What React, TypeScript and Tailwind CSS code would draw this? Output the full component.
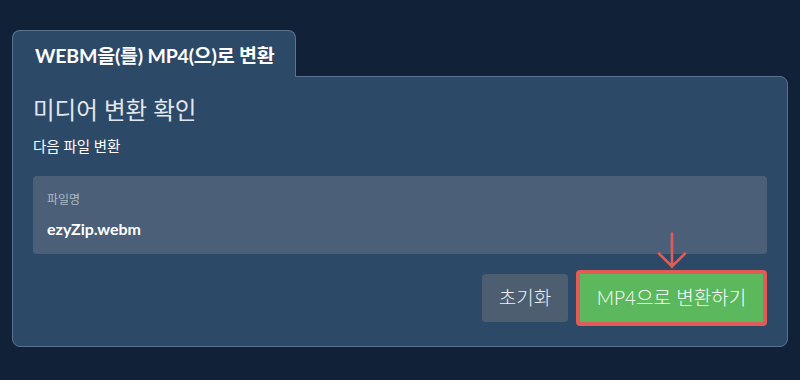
import React from 'react';

const font = { fontFamily: "Lato, 'Noto Sans CJK KR', sans-serif" };

const App: React.FC = () => {
  return (
    <div className="w-[800px] h-[380px] bg-[#112238] pt-[30px] px-[12px]" style={font}>
      <div className="w-[776px]">
        {/* Tab */}
        <div className="relative z-10 -mb-px w-[284px] h-[47px] bg-[#2d4968] border border-b-0 border-[#5b7391] rounded-t-lg flex items-center pl-[22px] pt-[3px]">
          <span className="text-white font-bold text-[19.5px] tracking-[-0.2px]">WEBM을(를) MP4(으)로 변환</span>
        </div>

        {/* Panel body */}
        <div className="relative bg-[#2d4968] border border-[#5b7391] rounded-b-lg rounded-tr-lg h-[271px] px-[20px] pt-[17px]">
          <h1 className="text-[23.5px] text-[#e3e8ee] leading-[32px]">미디어 변환 확인</h1>
          <p className="text-[14.5px] text-white mt-[11px] leading-[20px]">다음 파일 변환</p>

          <div className="mt-[19px] h-[78px] bg-[#4b6078] rounded-[4px] px-[14px] pt-[15px]">
            <div className="text-[12px] text-[#aeb9c6] leading-[18px]">파일명</div>
            <div className="text-[16px] font-bold text-white mt-[9px] leading-[22px]">ezyZip.webm</div>
          </div>

          <div className="flex justify-end gap-[8px] mt-[16px]">
            <button className="mt-[4px] h-[48px] w-[86px] bg-[#4d5e70] rounded-[4px] text-[#eef1f4] text-[19px] font-light">초기화</button>
            <button className="h-[56px] w-[191px] bg-[#5cb85c] border-[4px] border-[#e05c57] rounded-[4px] text-white text-[19px] font-light">MP4으로 변환하기</button>
          </div>

          <svg className="absolute left-[644px] top-[155px]" width="30" height="37" viewBox="0 0 30 37" fill="none">
            <path d="M15 1.5 V35 M2 21.5 L15 34.5 L28 21.5" stroke="#e05c57" strokeWidth="2.6" strokeLinecap="round" strokeLinejoin="miter" />
          </svg>
        </div>
      </div>
    </div>
  );
};

export default App;
